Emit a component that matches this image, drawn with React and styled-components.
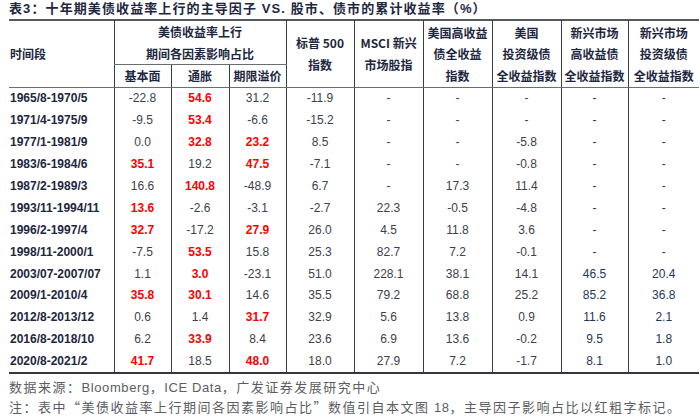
import React from "react";
import styled, { createGlobalStyle } from "styled-components";

const Global = createGlobalStyle`
  html, body { margin: 0; padding: 0; background: #ffffff; }
  body { width: 700px; height: 417px; overflow: hidden; }
`;

const CJK = `"Noto Sans CJK SC", "Liberation Sans", sans-serif`;
const LATIN = `"Liberation Sans", Arial, "Noto Sans CJK SC", sans-serif`;

const Page = styled.div`
  padding: 0 1px 0 9px;
  font-family: ${LATIN};
`;

const Title = styled.div`
  height: 19px;
  line-height: 18px;
  font-family: ${LATIN};
  font-size: 13px;
  font-weight: 700;
  color: #1d2740;
  white-space: nowrap;
  letter-spacing: 1.1px;
`;

const Table = styled.table`
  width: 690px;
  table-layout: fixed;
  border-collapse: collapse;
  border-top: 2px solid #555a61;
  border-bottom: 2px solid #333840;
`;

const Th = styled.th`
  font-family: ${CJK};
  font-size: 12px;
  font-weight: 700;
  color: #1d2740;
  line-height: 21.5px;
  padding: 0;
  text-align: ${(p) => (p.$left ? "left" : "center")};
  padding-left: ${(p) => (p.$left ? "1px" : "0")};
  vertical-align: middle;
  white-space: nowrap;
  border-left: ${(p) => (p.$first ? "none" : "1px solid #3a3d42")};
  border-bottom: 1px solid #6a6d72;
`;

const Line = styled.span`
  display: block;
  height: 21.5px;
`;

const Td = styled.td`
  height: 21.9px;
  padding: 0;
  font-family: ${LATIN};
  font-size: 12px;
  line-height: 14px;
  text-align: center;
  vertical-align: middle;
  white-space: nowrap;
  color: ${(p) => (p.$hot ? "#ff0000" : p.$tone === "navy" ? "#24365c" : "#3c414c")};
  font-weight: ${(p) => (p.$hot ? 700 : 400)};
  border-left: 1px solid #3a3d42;
`;

const DateCell = styled.td`
  height: 21.9px;
  padding: 0 0 0 1px;
  font-family: ${LATIN};
  font-size: 12px;
  font-weight: 700;
  color: #1d2740;
  text-align: left;
  vertical-align: middle;
  white-space: nowrap;
`;

const Notes = styled.div`
  padding-top: 3px;
`;

const Foot = styled.div`
  font-family: ${CJK};
  font-size: 13px;
  letter-spacing: 1.5px;
  color: #5a5d63;
  line-height: 20px;
  height: 20px;
  white-space: nowrap;
`;

const FootLatin = styled.span`
  font-family: ${LATIN};
  letter-spacing: 0.6px;
`;

const widths = [105, 57, 58, 57, 68, 69, 69, 69, 67, 71];

const rows = [
  ["1965/8-1970/5", "-22.8", "54.6*", "31.2", "-11.9", "-", "-", "-", "-", "-"],
  ["1971/4-1975/9", "-9.5", "53.4*", "-6.6", "-15.2", "-", "-", "-", "-", "-"],
  ["1977/1-1981/9", "0.0", "32.8*", "23.2*", "8.5", "-", "-", "-5.8", "-", "-"],
  ["1983/6-1984/6", "35.1*", "19.2", "47.5*", "-7.1", "-", "-", "-0.8", "-", "-"],
  ["1987/2-1989/3", "16.6", "140.8*", "-48.9", "6.7", "-", "17.3", "11.4", "-", "-"],
  ["1993/11-1994/11", "13.6*", "-2.6", "-3.1", "-2.7", "22.3", "-0.5", "-4.8", "-", "-"],
  ["1996/2-1997/4", "32.7*", "-17.2", "27.9*", "26.0", "4.5", "11.8", "3.6", "-", "-"],
  ["1998/11-2000/1", "-7.5", "53.5*", "15.8", "25.3", "82.7", "7.2", "-0.1", "-", "-"],
  ["2003/07-2007/07", "1.1", "3.0*", "-23.1", "51.0", "228.1", "38.1", "14.1", "46.5", "20.4"],
  ["2009/1-2010/4", "35.8*", "30.1*", "14.6", "35.5", "79.2", "68.8", "25.2", "85.2", "36.8"],
  ["2012/8-2013/12", "0.6", "1.4", "31.7*", "32.9", "5.6", "13.8", "0.9", "11.6", "2.1"],
  ["2016/8-2018/10", "6.2", "33.9*", "8.4", "23.6", "6.9", "13.6", "-0.2", "9.5", "1.8"],
  ["2020/8-2021/2", "41.7*", "18.5", "48.0*", "18.0", "27.9", "7.2", "-1.7", "8.1", "1.0"],
];

const Lines = ({ items }) => items.map((t, i) => <Line key={i}>{t}</Line>);

export default function App() {
  return (
    <>
      <Global />
      <Page>
        <Title>表3：十年期美债收益率上行的主导因子 VS. 股市、债市的累计收益率（%）</Title>
        <Table>
          <colgroup>
            {widths.map((w, i) => (
              <col key={i} style={{ width: w }} />
            ))}
          </colgroup>
          <thead>
            <tr>
              <Th rowSpan={3} $first $left>时间段</Th>
              <Th colSpan={3} rowSpan={2}>
                <Lines items={["美债收益率上行", "期间各因素影响占比"]} />
              </Th>
              <Th rowSpan={3}><Lines items={["标普 500", "指数"]} /></Th>
              <Th rowSpan={3}><Lines items={["MSCI 新兴", "市场股指"]} /></Th>
              <Th rowSpan={3}><Lines items={["美国高收益", "债全收益", "指数"]} /></Th>
              <Th rowSpan={3}><Lines items={["美国", "投资级债", "全收益指数"]} /></Th>
              <Th rowSpan={3}><Lines items={["新兴市场", "高收益债", "全收益指数"]} /></Th>
              <Th rowSpan={3}><Lines items={["新兴市场", "投资级债", "全收益指数"]} /></Th>
            </tr>
            <tr />
            <tr>
              <Th>基本面</Th>
              <Th>通胀</Th>
              <Th>期限溢价</Th>
            </tr>
          </thead>
          <tbody>
            {rows.map((r) => (
              <tr key={r[0]}>
                <DateCell>{r[0]}</DateCell>
                {r.slice(1).map((v, i) => {
                  const hot = v.endsWith("*");
                  return (
                    <Td key={i} $hot={hot} $tone={i >= 7 ? "navy" : "gray"}>
                      {hot ? v.slice(0, -1) : v}
                    </Td>
                  );
                })}
              </tr>
            ))}
          </tbody>
        </Table>
        <Notes>
          <Foot>
            数据来源：<FootLatin>Bloomberg</FootLatin>，<FootLatin>ICE Data</FootLatin>，广发证券发展研究中心
          </Foot>
          <Foot>
            注：表中“美债收益率上行期间各因素影响占比”数值引自本文图 <FootLatin>18</FootLatin>，主导因子影响占比以红粗字标记。
          </Foot>
        </Notes>
      </Page>
    </>
  );
}
